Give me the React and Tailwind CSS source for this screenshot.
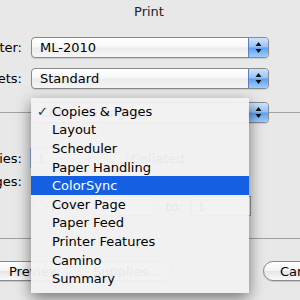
import React from "react";

function Stepper() {
  return (
    <div className="flex h-full w-[20px] shrink-0 items-center justify-center rounded-r-[4px] border-l border-[#5a7fc0] bg-[linear-gradient(#cfe3fa,#95c2f5_48%,#5d9ff0_52%,#9fcdfb)]">
      <svg width="7" height="13" viewBox="0 0 7 13">
        <polygon points="3.5,1 6.5,5 0.5,5" fill="#111" />
        <polygon points="0.5,8 6.5,8 3.5,12" fill="#111" />
      </svg>
    </div>
  );
}

function Popup({ text }) {
  return (
    <div className="flex h-[21px] w-[238px] shrink-0 items-center overflow-hidden rounded-[4px] border border-[#8a8a8a] bg-[linear-gradient(#ffffff,#f7f7f7_48%,#ebebeb_52%,#f6f6f6)] shadow-[0_1px_1px_rgba(0,0,0,0.12)]">
      <span className="flex-1 whitespace-nowrap pl-[8px] leading-none">{text}</span>
      <Stepper />
    </div>
  );
}

function Label({ text }) {
  return (
    <div className="ml-[-58px] w-[80px] shrink-0 whitespace-nowrap text-right leading-none">
      {text}
    </div>
  );
}

function Button({ text, cls }) {
  return (
    <div
      className={
        "flex h-[20px] shrink-0 items-center rounded-full border border-[#8a8a8a] bg-[linear-gradient(#ffffff,#f4f4f4_50%,#e6e6e6_52%,#fafafa)] leading-none shadow-[0_1px_1px_rgba(0,0,0,0.15)] " +
        cls
      }
    >
      {text}
    </div>
  );
}

const items = [
  "Copies & Pages",
  "Layout",
  "Scheduler",
  "Paper Handling",
  "ColorSync",
  "Cover Page",
  "Paper Feed",
  "Printer Features",
  "Camino",
  "Summary",
];

export default function App() {
  return (
    <div className="relative h-[300px] w-[300px] overflow-hidden bg-[#e8e8e8] font-['DejaVu_Sans',sans-serif] text-[13px] text-black">
      <div className="flex h-[22px] items-center justify-center text-[#222]">
        <span className="mr-[2px] leading-none">Print</span>
      </div>

      <div className="mt-[15px] flex items-center">
        <Label text="Printer:" />
        <div className="ml-[9px]">
          <Popup text="ML-2010" />
        </div>
      </div>

      <div className="mt-[10px] flex items-center">
        <Label text="Presets:" />
        <div className="ml-[9px]">
          <Popup text="Standard" />
        </div>
      </div>

      <div className="mt-[13px] flex items-center">
        <div className="h-px w-[31px] bg-[#a0a0a0]" />
        <Popup text="Copies & Pages" />
        <div className="h-px flex-1 bg-[#a0a0a0]" />
      </div>

      <div className="mt-[24px] flex items-center">
        <Label text="Copies:" />
        <div className="ml-[8px] flex h-[22px] w-[60px] items-center rounded-[2px] border-2 border-[#8fb4e8] bg-white pl-[5px] leading-none">
          1
        </div>
        <div className="ml-[25px] h-[12px] w-[12px] rounded-[2px] border border-[#888] bg-white" />
        <span className="ml-[4px] leading-none">Collated</span>
      </div>

      <div className="mt-[6px] flex items-center">
        <Label text="Pages:" />
        <div className="ml-[10px] h-[13px] w-[13px] rounded-full border border-[#888] bg-white" />
        <span className="ml-[5px] leading-none">All</span>
      </div>

      <div className="mt-[8px] flex items-center">
        <div className="ml-[33px] h-[13px] w-[13px] rounded-full border border-[#888] bg-white" />
        <span className="ml-[5px] leading-none">From:</span>
        <div className="ml-[6px] flex h-[20px] w-[60px] items-center border border-[#999] bg-white pl-[5px] leading-none">
          1
        </div>
        <span className="ml-[12px] leading-none">to:</span>
        <div className="ml-[8px] flex h-[20px] w-[60px] items-center border border-[#999] bg-white pl-[5px] leading-none">
          1
        </div>
      </div>

      <div className="mt-[22px] h-px bg-[#a0a0a0]" />

      <div className="mt-[22px] flex items-center">
        <Button text="Preview" cls="ml-[-20px] w-[88px] pl-[28px]" />
        <Button text="Supplies..." cls="ml-[12px] w-[92px] pl-[12px]" />
        <Button text="Cancel" cls="ml-[91px] w-[80px] pl-[16px]" />
      </div>

      <div className="absolute left-[31px] top-[98px] h-[195px] w-[218px] bg-[rgba(241,241,241,0.955)] pt-[4px] shadow-[0_5px_14px_rgba(0,0,0,0.5)]">
        {items.map((it, i) => (
          <div
            key={it}
            className={
              "relative flex h-[18.6px] items-center pl-[21px] leading-none " +
              (it === "ColorSync" ? "bg-[#1560e2] text-white" : "")
            }
          >
            {i === 0 && (
              <span className="absolute left-[6px] text-[13px] text-[#333]">✓</span>
            )}
            {it}
          </div>
        ))}
      </div>
    </div>
  );
}
